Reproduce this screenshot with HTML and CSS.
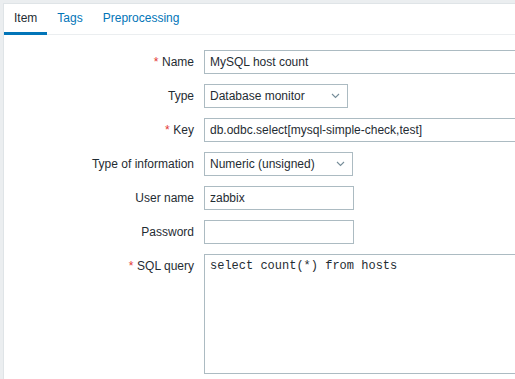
FILE: index.html
```html
<!DOCTYPE html>
<html lang="en">
<head>
    <meta charset="UTF-8">
    <meta name="viewport" content="width=device-width, initial-scale=1.0">
    <title>Item</title>
    <link rel="stylesheet" href="styles.css">
</head>
<body>
    <div class="page">
        <div class="panel">
            <ul class="tabs">
                <li class="tab active">Item</li>
                <li class="tab">Tags</li>
                <li class="tab">Preprocessing</li>
            </ul>
            <form class="form-grid">
                <label class="form-label required" for="name">Name</label>
                <div class="form-field">
                    <input type="text" id="name" class="input input-wide" value="MySQL host count">
                </div>

                <label class="form-label">Type</label>
                <div class="form-field">
                    <button type="button" class="select select-type">
                        <span>Database monitor</span>
                        <svg class="chevron" width="9" height="6" viewBox="0 0 9 6"><path d="M1 1l3.5 3.5L8 1" fill="none" stroke="#768d99" stroke-width="1.1"/></svg>
                    </button>
                </div>

                <label class="form-label required" for="key">Key</label>
                <div class="form-field">
                    <input type="text" id="key" class="input input-wide" value="db.odbc.select[mysql-simple-check,test]">
                </div>

                <label class="form-label">Type of information</label>
                <div class="form-field">
                    <button type="button" class="select select-info">
                        <span>Numeric (unsigned)</span>
                        <svg class="chevron" width="9" height="6" viewBox="0 0 9 6"><path d="M1 1l3.5 3.5L8 1" fill="none" stroke="#768d99" stroke-width="1.1"/></svg>
                    </button>
                </div>

                <label class="form-label" for="username">User name</label>
                <div class="form-field">
                    <input type="text" id="username" class="input input-small" value="zabbix">
                </div>

                <label class="form-label" for="password">Password</label>
                <div class="form-field">
                    <input type="password" id="password" class="input input-small">
                </div>

                <label class="form-label required" for="query">SQL query</label>
                <div class="form-field">
                    <textarea id="query" class="textarea">select count(*) from hosts</textarea>
                </div>
            </form>
        </div>
    </div>
</body>
</html>
```

FILE: styles.css
```css
* {
    margin: 0;
    padding: 0;
    box-sizing: border-box;
}

html, body {
    height: 100%;
    overflow: hidden;
}

body {
    font-family: 'Liberation Sans', Arial, sans-serif;
    font-size: 12px;
    color: #1f2c33;
    background-color: #ebeef0;
}

.page {
    height: 100%;
    padding: 3px 0 0 3px;
}

.panel {
    height: 100%;
    overflow: hidden;
    background-color: #fff;
    border-top: 1px solid #dfe4e7;
    border-left: 1px solid #dfe4e7;
}

.tabs {
    list-style: none;
    display: flex;
    border-bottom: 1px solid #ebeef0;
}

.tab {
    height: 31px;
    line-height: 28px;
    padding: 0 10px;
    margin-bottom: -1px;
    border-bottom: 3px solid transparent;
    color: #0275b8;
    cursor: pointer;
}

.tab.active {
    color: #1f2c33;
    border-bottom-color: #0275b8;
}

.form-grid {
    display: grid;
    grid-template-columns: 180px 1fr;
    column-gap: 10px;
    row-gap: 10px;
    padding: 15px 10px 10px;
    align-items: start;
}

.form-label {
    text-align: right;
    line-height: 24px;
    white-space: nowrap;
}

.form-label.required::before {
    content: '*';
    color: #e33734;
    margin-right: 0.3em;
}

.form-field {
    display: flex;
    min-width: 0;
}

.input,
.select,
.textarea {
    font-family: 'Liberation Sans', Arial, sans-serif;
    font-size: 12px;
    color: #1f2c33;
    background-color: #fff;
    border: 1px solid #acbbc2;
    border-radius: 0;
    outline: none;
}

.input {
    height: 24px;
    padding: 0 5px;
}

.input-wide {
    flex: 0 0 453px;
}

.input-small {
    width: 150px;
}

.select {
    height: 24px;
    display: flex;
    align-items: center;
    justify-content: space-between;
    padding: 0 7px 0 5px;
    text-align: left;
    cursor: pointer;
}

.select-type {
    width: 144px;
}

.select-info {
    width: 149px;
}

.chevron {
    flex-shrink: 0;
}

.textarea {
    flex: 0 0 453px;
    height: 120px;
    padding: 4px 5px;
    font-family: 'Liberation Mono', 'Courier New', monospace;
    line-height: 14px;
    resize: none;
}
```
